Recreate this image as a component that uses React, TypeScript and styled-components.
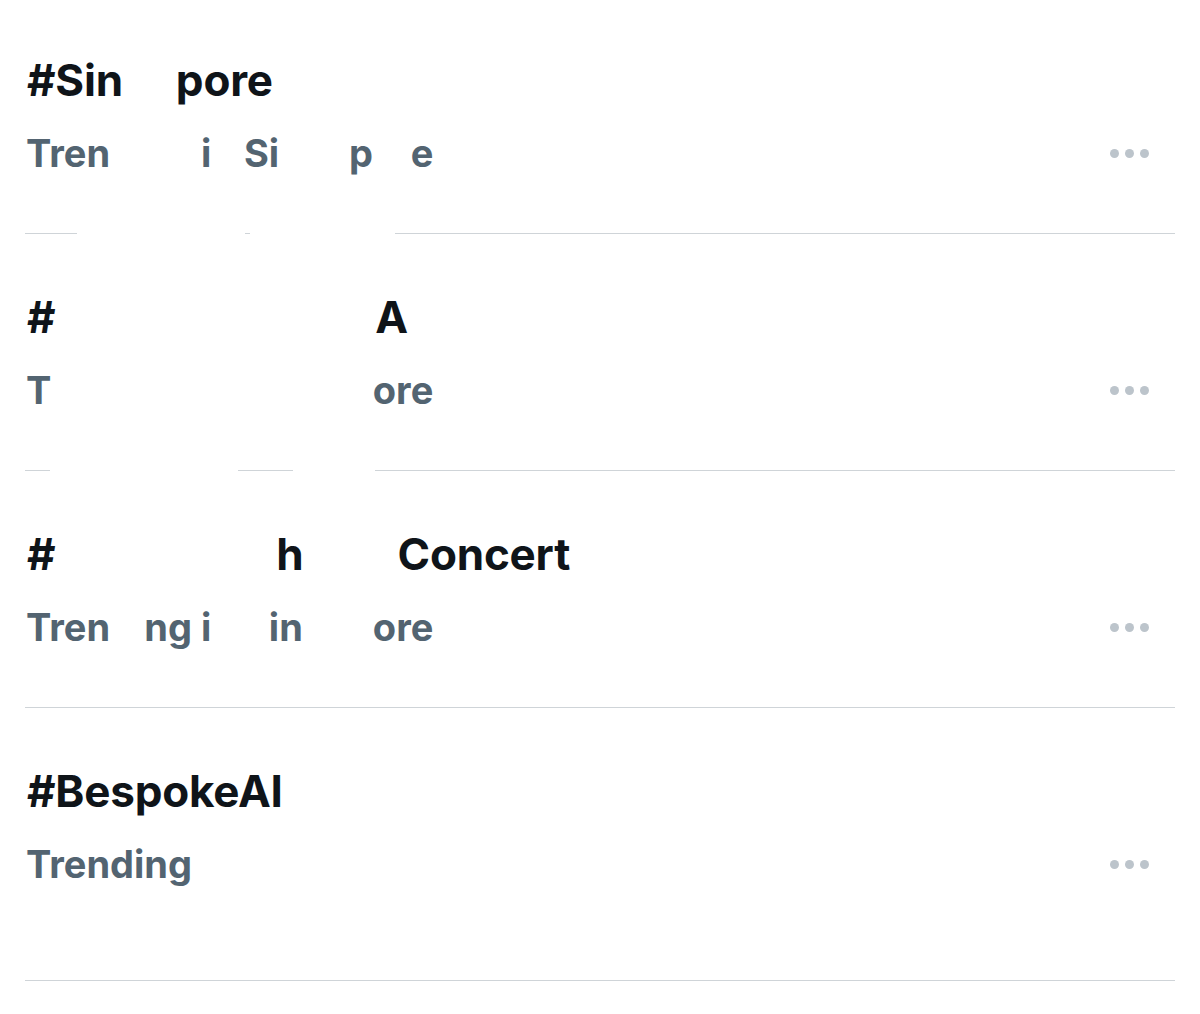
import { ReactNode } from "react"
import styled, { createGlobalStyle } from "styled-components"

const GlobalStyle = createGlobalStyle`
  html, body {
    margin: 0;
    padding: 0;
    background: #ffffff;
  }
  body {
    font-family: Inter, "Noto Sans", "Liberation Sans", sans-serif;
    -webkit-font-smoothing: antialiased;
  }
`

const Page = styled.div`
  width: 1200px;
  min-height: 1014px;
  padding: 0 25px;
  box-sizing: border-box;
  background: #ffffff;
`

const List = styled.ul`
  list-style: none;
  margin: 0;
  padding: 0;
`

const Item = styled.li<{ $top?: number; $bottom?: number }>`
  display: flex;
  flex-direction: column;
  padding-top: ${(p) => p.$top ?? 57}px;
  padding-bottom: ${(p) => p.$bottom ?? 57}px;
`

const Title = styled.div`
  padding-left: 2px;
  font-size: 44px;
  line-height: 52px;
  font-weight: 700;
  color: #0f1419;
  letter-spacing: -0.2px;
  white-space: nowrap;
`

const SubRow = styled.div`
  display: flex;
  align-items: center;
  justify-content: space-between;
  margin-top: 24px;
`

const Sub = styled.div`
  padding-left: 1px;
  font-size: 38px;
  line-height: 46px;
  font-weight: 700;
  color: #536471;
  white-space: nowrap;
`

// text that was scrubbed out of the screenshot
const Hidden = styled.span`
  color: transparent;
`

const Blank = styled.span<{ $w: number }>`
  display: inline-block;
  width: ${(p) => p.$w}px;
`

const More = styled.button`
  display: flex;
  gap: 6px;
  margin-right: 26px;
  padding: 0;
  border: 0;
  background: none;
  cursor: pointer;
`

const Dot = styled.span`
  width: 9px;
  height: 9px;
  border-radius: 50%;
  background: #bcc4cb;
`

type Seg = [number, number]

const Rule = styled.div<{ $segs?: Seg[] }>`
  height: 1px;
  background: ${(p) =>
    p.$segs
      ? `linear-gradient(to right, ${p.$segs
          .map(
            ([a, b], i) =>
              `transparent ${i === 0 ? 0 : p.$segs![i - 1][1]}px, transparent ${a}px, #cfd4d8 ${a}px, #cfd4d8 ${b}px`
          )
          .join(", ")}, transparent ${p.$segs[p.$segs.length - 1][1]}px)`
      : "#cfd4d8"};
`

interface TrendProps {
  title: ReactNode
  sub: ReactNode
  top?: number
  bottom?: number
  segs?: Seg[]
}

const Trend = ({ title, sub, top, bottom, segs }: TrendProps) => (
  <>
    <Item $top={top} $bottom={bottom}>
      <Title>{title}</Title>
      <SubRow>
        <Sub>{sub}</Sub>
        <More aria-label="More">
          <Dot />
          <Dot />
          <Dot />
        </More>
      </SubRow>
    </Item>
    <Rule $segs={segs} />
  </>
)

export default function App() {
  return (
    <Page>
      <GlobalStyle />
      <List>
        <Trend
          top={54}
          segs={[
            [0, 52],
            [220, 225],
            [370, 1150],
          ]}
          title={
            <>
              #Sin<Hidden>ga</Hidden>pore
            </>
          }
          sub={
            <>
              Tren<Hidden>ding </Hidden>i<Hidden>n </Hidden>Si<Hidden>nga</Hidden>p<Hidden>or</Hidden>e
            </>
          }
        />
        <Trend
          segs={[
            [0, 25],
            [213, 268],
            [350, 1150],
          ]}
          title={
            <>
              #<Blank $w={320} />A
            </>
          }
          sub={
            <>
              T<Hidden>rending in Singap</Hidden>ore
            </>
          }
        />
        <Trend
          title={
            <>
              #<Blank $w={221} />h<Blank $w={94} />Concert
            </>
          }
          sub={
            <>
              Tren<Hidden>di</Hidden>ng i<Hidden>n S</Hidden>in<Hidden>gap</Hidden>ore
            </>
          }
        />
        <Trend bottom={93} title="#BespokeAI" sub="Trending" />
      </List>
    </Page>
  )
}
